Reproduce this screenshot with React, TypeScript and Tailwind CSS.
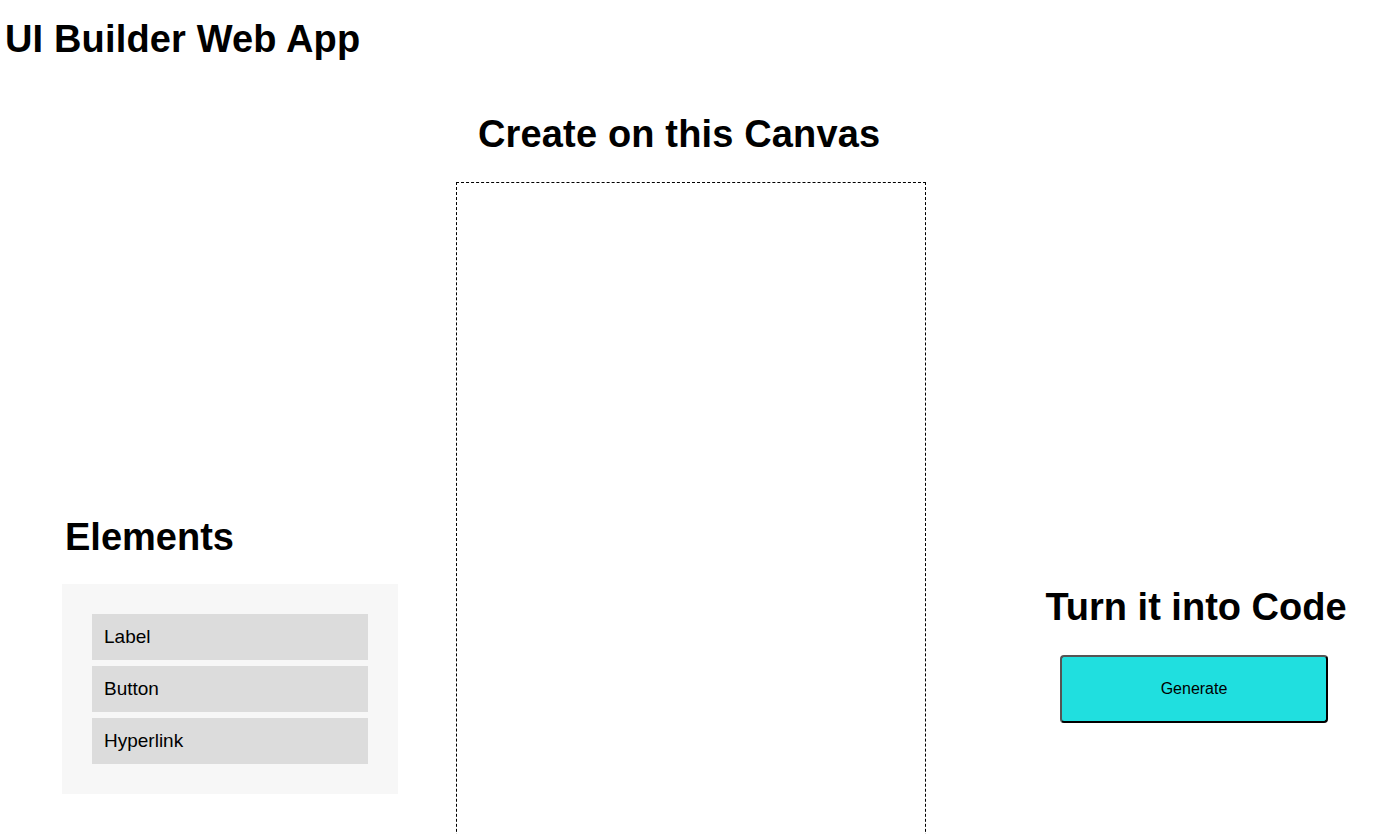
import React from "react";

export default function App() {
  return (
    <div className="min-h-screen bg-white text-black font-['Liberation_Sans',Arial,sans-serif] overflow-hidden h-[834px]">
      <h1 className="text-[38px] font-bold leading-[44px] pl-[5px] pt-[17px] tracking-[0.15px]">UI Builder Web App</h1>
      <div className="flex items-start mt-[51px]">
        <div className="ml-[62px] w-[336px] pt-[403px] flex flex-col">
          <h2 className="text-[38px] font-bold leading-[44px] pl-[3px]">Elements</h2>
          <div className="mt-[25px] bg-[#f7f7f7] p-[30px] flex flex-col gap-[6px]">
            {["Label", "Button", "Hyperlink"].map((t) => (
              <div key={t} className="h-[46px] bg-[#dcdcdc] px-[12px] flex items-center text-[19px]">
                {t}
              </div>
            ))}
          </div>
        </div>
        <div className="ml-[58px] w-[470px] flex flex-col">
          <h2 className="text-[38px] font-bold leading-[44px] pl-[22px] tracking-[0.15px]">Create on this Canvas</h2>
          <div className="mt-[26px] h-[700px] border border-dashed border-black"></div>
        </div>
        <div className="ml-[118px] w-[304px] pt-[473px] flex flex-col items-center">
          <h2 className="text-[38px] font-bold leading-[44px] whitespace-nowrap">Turn it into Code</h2>
          <button className="mt-[26px] mr-[4px] w-[268px] h-[68px] bg-[#20dfdf] border-2 border-t-[#555] border-l-[#555] border-r-black border-b-black rounded-[4px] text-[16px] text-black">
            Generate
          </button>
        </div>
      </div>
    </div>
  );
}
